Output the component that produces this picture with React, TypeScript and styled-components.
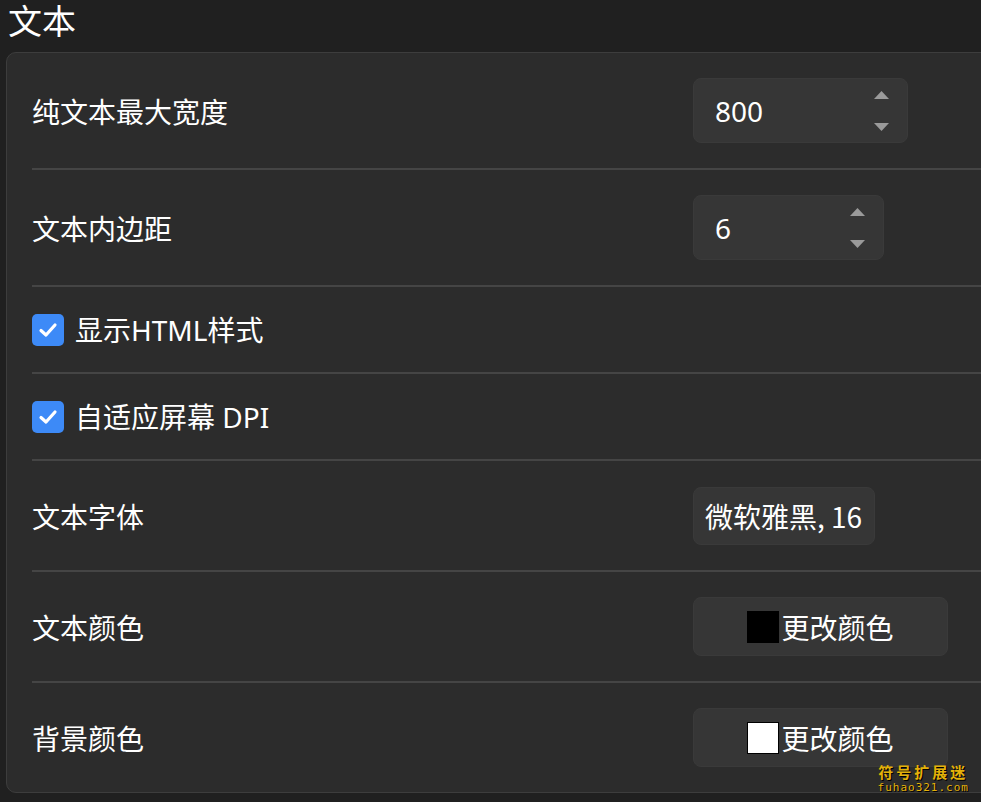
import React from "react";
import styled, { createGlobalStyle } from "styled-components";

const Global = createGlobalStyle`
  html, body { margin: 0; padding: 0; background: #202020; overflow: hidden; }
  body { font-family: "Noto Sans", "Noto Sans CJK SC", sans-serif; color: #ffffff; }
`;

const Page = styled.div`
  position: relative;
  width: 981px;
  height: 802px;
  padding-left: 6px;
  box-sizing: border-box;
  overflow: hidden;
`;

const Title = styled.h1`
  margin: 0;
  padding-left: 2px;
  height: 52px;
  font-size: 34px;
  font-weight: 400;
  line-height: 40px;
  font-family: "Noto Sans CJK SC", sans-serif;
`;

const Card = styled.div`
  width: 1000px;
  background: #2c2c2c;
  border: 1px solid #3d3d3d;
  border-radius: 10px;
  padding-left: 25px;
  box-sizing: border-box;
`;

const Row = styled.div<{ $h: number }>`
  display: grid;
  grid-template-columns: 661px auto;
  align-items: center;
  box-sizing: border-box;
  height: ${(p) => p.$h}px;
  & + & { border-top: 2px solid #454545; }
`;

const Label = styled.div`
  font-family: "Noto Sans CJK SC", sans-serif;
  font-size: 28px;
  line-height: 34px;
  color: #ffffff;
`;

const CheckLabel = styled.label`
  display: flex;
  align-items: center;
  gap: 11px;
  font-family: "Noto Sans", "Noto Sans CJK SC", sans-serif;
  font-size: 28px;
  line-height: 34px;
`;

const Box = styled.span`
  width: 32px;
  height: 32px;
  border-radius: 5px;
  background: #3d8af7;
  display: flex;
  align-items: center;
  justify-content: center;
`;

const Control = styled.div<{ $w: number; $h: number }>`
  width: ${(p) => p.$w}px;
  height: ${(p) => p.$h}px;
  box-sizing: border-box;
  background: #363636;
  border: 1px solid #3a3a3a;
  border-radius: 8px;
  display: flex;
  align-items: center;
  font-size: 28px;
  font-family: "Noto Sans", "Noto Sans CJK SC", sans-serif;
`;

const SpinText = styled.span`
  flex: 1;
  padding-left: 21px;
`;

const Arrows = styled.div`
  display: flex;
  flex-direction: column;
  justify-content: space-between;
  height: 40px;
  padding-right: 18px;
`;

const FontText = styled.span`
  padding-left: 11px;
  font-family: "Noto Sans CJK SC", sans-serif;
  font-size: 28px;
`;

const ColorBtn = styled(Control)`
  justify-content: center;
  font-family: "Noto Sans CJK SC", sans-serif;
  font-size: 28px;
`;

const Swatch = styled.span<{ $c: string }>`
  width: 32px;
  height: 32px;
  box-sizing: border-box;
  background: ${(p) => p.$c};
  border: 1px solid #000;
  margin-right: 2px;
`;

const Watermark = styled.div`
  position: absolute;
  right: 12px;
  bottom: 9px;
  display: flex;
  flex-direction: column;
  align-items: center;
  color: #e4b20a;
  text-shadow: 1px 1px 0 #000;
  line-height: 1;
`;

const WmTop = styled.span`
  font-family: "Noto Sans CJK SC", sans-serif;
  font-size: 15px;
  font-weight: 700;
  letter-spacing: 3px;
`;

const WmBottom = styled.span`
  font-family: "DejaVu Sans Mono", monospace;
  font-size: 11px;
  letter-spacing: 1px;
  margin-top: 3px;
`;

const Up = () => (
  <svg width="15" height="8" viewBox="0 0 15 8"><path d="M7.5 0 L15 8 L0 8 Z" fill="#9a9a9a" /></svg>
);
const Down = () => (
  <svg width="15" height="8" viewBox="0 0 15 8"><path d="M0 0 L15 0 L7.5 8 Z" fill="#9a9a9a" /></svg>
);
const Check = () => (
  <svg width="20" height="16" viewBox="0 0 20 16">
    <path d="M3 8.5 L8 13 L17 3" fill="none" stroke="#fff" strokeWidth="3.2" strokeLinecap="round" strokeLinejoin="round" />
  </svg>
);

const Spin = ({ value, w }: { value: string; w: number }) => (
  <Control $w={w} $h={65}>
    <SpinText>{value}</SpinText>
    <Arrows><Up /><Down /></Arrows>
  </Control>
);

export default function App() {
  return (
    <Page>
      <Global />
      <Title>文本</Title>
      <Card>
        <Row $h={115}>
          <Label>纯文本最大宽度</Label>
          <Spin value="800" w={215} />
        </Row>
        <Row $h={117}>
          <Label>文本内边距</Label>
          <Spin value="6" w={191} />
        </Row>
        <Row $h={87}>
          <CheckLabel><Box><Check /></Box>显示HTML样式</CheckLabel>
        </Row>
        <Row $h={87}>
          <CheckLabel><Box><Check /></Box>自适应屏幕 DPI</CheckLabel>
        </Row>
        <Row $h={111}>
          <Label>文本字体</Label>
          <Control $w={182} $h={58}><FontText>微软雅黑, 16</FontText></Control>
        </Row>
        <Row $h={111}>
          <Label>文本颜色</Label>
          <ColorBtn $w={255} $h={59}><Swatch $c="#000" />更改颜色</ColorBtn>
        </Row>
        <Row $h={111}>
          <Label>背景颜色</Label>
          <ColorBtn $w={255} $h={59}><Swatch $c="#fff" />更改颜色</ColorBtn>
        </Row>
      </Card>
      <Watermark>
        <WmTop>符号扩展迷</WmTop>
        <WmBottom>fuhao321.com</WmBottom>
      </Watermark>
    </Page>
  );
}
